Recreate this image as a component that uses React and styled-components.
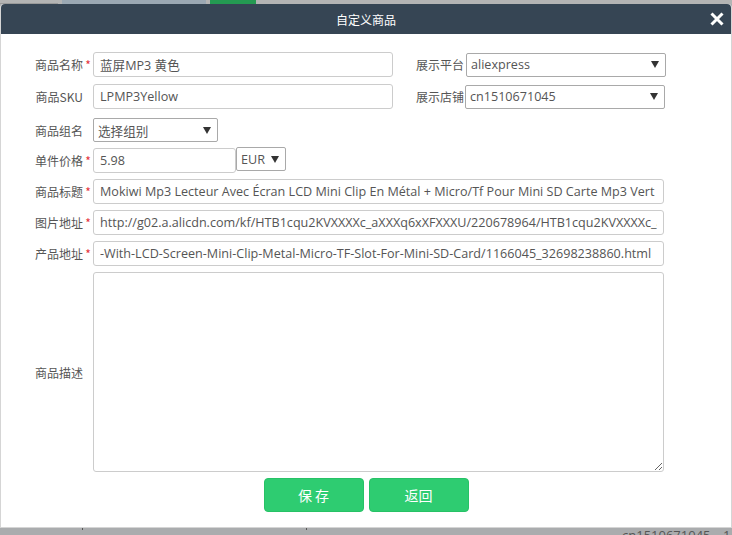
import styled, { createGlobalStyle } from 'styled-components';

const GlobalStyle = createGlobalStyle`
    html, body {
        margin: 0;
        padding: 0;
        background: #aaacae;
        font-family: "Open Sans", "Noto Sans CJK SC", sans-serif;
    }
`

const Page = styled.div`
    width: 732px;
    height: 535px;
    overflow: hidden;
    display: flex;
    flex-direction: column;
`

const TopStrip = styled.div`
    height: 4px;
    background: #b4b4b4;
    display: flex;
    gap: 4px;
`

const StripTab = styled.div`
    width: ${p => p.$w}px;
    height: 4px;
    background: ${p => p.$bg};
    border-bottom: ${p => p.$line ? '1px solid #9a9a9a' : 'none'};
    box-sizing: border-box;
`

const Dialog = styled.div`
    background: #fff;
    border: 1px solid #d5d5d5;
    border-top: none;
    border-radius: 4px 4px 0 0;
    display: flex;
    flex-direction: column;
    height: 524px;
    box-sizing: border-box;
`

const Header = styled.div`
    height: 30px;
    background: #364554;
    border-radius: 4px 4px 0 0;
    display: flex;
    align-items: center;
    justify-content: center;
    position: relative;
    color: #fff;
    font-family: "Noto Sans CJK SC", sans-serif;
    font-size: 12px;
`

const Close = styled.button`
    position: absolute;
    right: 6px;
    top: 7px;
    width: 16px;
    height: 16px;
    padding: 0;
    border: none;
    background: transparent;
    cursor: pointer;
`

const Body = styled.div`
    padding: 18px 0 0 0;
    display: flex;
    flex-direction: column;
`

const Row = styled.div`
    display: flex;
    align-items: center;
    margin-bottom: ${p => p.$space ?? 6}px;
`

const Label = styled.div`
    width: ${p => p.$w || 92}px;
    display: flex;
    justify-content: flex-end;
    align-items: center;
    padding-right: 1px;
    box-sizing: border-box;
    font-family: "Noto Sans CJK SC", sans-serif;
    font-size: 12px;
    color: #555;
    white-space: nowrap;
`

const Star = styled.span`
    display: inline-block;
    width: 8px;
    text-align: center;
    color: #e5333a;
    font-size: 12px;
    margin-left: 1px;
`

const Input = styled.input`
    width: ${p => p.$w}px;
    height: 25px;
    box-sizing: border-box;
    border: 1px solid #ccc;
    border-radius: 3px;
    padding: 0 6px;
    font-family: "Open Sans", "Noto Sans CJK SC", sans-serif;
    font-size: 12.6px;
    color: #555;
    outline: none;
`

const Select = styled.div`
    width: ${p => p.$w}px;
    height: ${p => p.$h || 24}px;
    box-sizing: border-box;
    border: 1px solid #a9a9a9;
    border-radius: 2px;
    display: flex;
    align-items: center;
    justify-content: space-between;
    padding: 0 6px 0 4px;
    font-family: "Open Sans", "Noto Sans CJK SC", sans-serif;
    font-size: 12.6px;
    color: #555;
    background: #fff;
    margin-left: ${p => p.$ml || 0}px;
    align-self: ${p => p.$top ? 'flex-start' : 'auto'};
    margin-top: ${p => p.$top || 0}px;
`

const RightGroup = styled.div`
    display: flex;
    align-items: center;
    margin-left: 20px;
`

const TextArea = styled.textarea`
    width: 571px;
    height: 200px;
    box-sizing: border-box;
    border: 1px solid #ccc;
    border-radius: 3px;
    outline: none;
`

const Actions = styled.div`
    display: flex;
    justify-content: center;
    gap: 5px;
`

const Button = styled.button`
    width: 100px;
    height: 34px;
    background: #2ecc71;
    border: 1px solid #27c266;
    border-radius: 4px;
    color: #fff;
    font-family: "Noto Sans CJK SC", sans-serif;
    font-size: 14px;
    cursor: pointer;
`

const BottomStrip = styled.div`
    flex: 1;
    position: relative;
    font-family: "Open Sans", sans-serif;
    font-size: 13px;
    color: #555;
`

const Tick = styled.span`
    position: absolute;
    top: 0;
    left: ${p => p.$x}px;
    width: 1px;
    height: 2px;
    background: #555;
`

const StripText = styled.span`
    position: absolute;
    top: -2px;
    left: ${p => p.$x}px;
    line-height: 18px;
`

function Arrow() {
    return (
        <svg width="8" height="7" viewBox="0 0 8 7">
            <path d="M0 0 H8 L4 7 Z" fill="#333" />
        </svg>
    )
}

function Field({ label, star, children, space }) {
    return (
        <Row $space={space}>
            <Label>
                {label}
                {star ? <Star>*</Star> : <Star />}
            </Label>
            {children}
        </Row>
    )
}

export default function App() {
    return (
        <Page>
            <GlobalStyle />
            <TopStrip>
                <StripTab $w={58} $bg="#b4b4b4" $line />
                <StripTab $w={144} $bg="#9ba8b3" />
                <StripTab $w={46} $bg="#249a52" />
            </TopStrip>
            <Dialog>
                <Header>
                    自定义商品
                    <Close aria-label="close">
                        <svg width="16" height="16" viewBox="0 0 16 16">
                            <path d="M2.5 2.5 L13.5 13.5 M13.5 2.5 L2.5 13.5" stroke="#fff" strokeWidth="3" />
                        </svg>
                    </Close>
                </Header>
                <Body>
                    <Field label="商品名称" star space={7}>
                        <Input $w={300} defaultValue="蓝屏MP3 黄色" />
                        <RightGroup>
                            <Label $w={52}>展示平台</Label>
                            <Select $w={200} $ml={1}>aliexpress<Arrow /></Select>
                        </RightGroup>
                    </Field>
                    <Field label="商品SKU" space={9}>
                        <Input $w={300} defaultValue="LPMP3Yellow" />
                        <RightGroup>
                            <Label $w={52}>展示店铺</Label>
                            <Select $w={200}>cn1510671045<Arrow /></Select>
                        </RightGroup>
                    </Field>
                    <Field label="商品组名" space={6}>
                        <Select $w={125}>选择组别<Arrow /></Select>
                    </Field>
                    <Field label="单件价格" star space={6}>
                        <Input $w={143} defaultValue="5.98" />
                        <Select $w={50} $top={-1}>EUR<Arrow /></Select>
                    </Field>
                    <Field label="商品标题" star>
                        <Input $w={571} defaultValue="Mokiwi Mp3 Lecteur Avec Écran LCD Mini Clip En Métal + Micro/Tf Pour Mini SD Carte Mp3 Vert" />
                    </Field>
                    <Field label="图片地址" star>
                        <Input $w={571} defaultValue="http://g02.a.alicdn.com/kf/HTB1cqu2KVXXXXc_aXXXq6xXFXXXU/220678964/HTB1cqu2KVXXXXc_aXXXq6xXFXXXU.jpg" />
                    </Field>
                    <Field label="产品地址" star>
                        <Input $w={571} defaultValue="-With-LCD-Screen-Mini-Clip-Metal-Micro-TF-Slot-For-Mini-SD-Card/1166045_32698238860.html" />
                    </Field>
                    <Field label="商品描述">
                        <TextArea />
                    </Field>
                    <Actions>
                        <Button>保 存</Button>
                        <Button>返回</Button>
                    </Actions>
                </Body>
            </Dialog>
            <BottomStrip>
                <Tick $x={82} />
                <Tick $x={306} />
                <StripText $x={622}>cn1510671045</StripText>
                <StripText $x={723}>14</StripText>
            </BottomStrip>
        </Page>
    )
}
